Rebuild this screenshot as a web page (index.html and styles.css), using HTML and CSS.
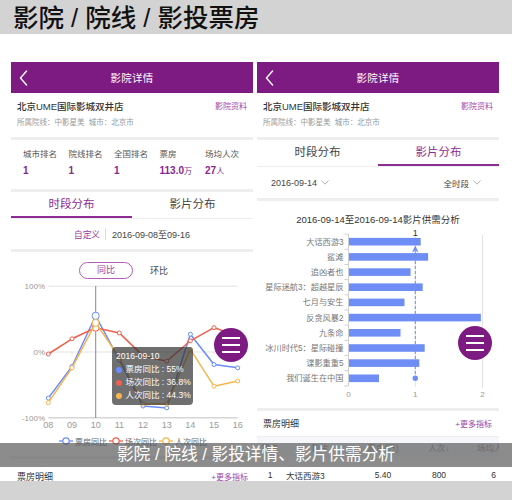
FILE: index.html
```html
<!DOCTYPE html>
<html lang="zh">
<head>
<meta charset="utf-8">
<title>影院 / 院线 / 影投票房</title>
<link rel="stylesheet" href="styles.css">
</head>
<body>
<div class="page">
  <div class="titlebar">影院 / 院线 / 影投票房</div>
  <div class="stage">
    <!-- Left phone -->
    <section class="phone">
      <div class="nav">
        <svg class="back" width="9" height="16" viewBox="0 0 9 16"><path d="M7.6 1 L1.4 8 L7.6 15" /></svg>
        <span class="nav-title">影院详情</span>
        <span></span>
      </div>
      <div class="info">
        <div class="name-row"><span class="name">北京UME国际影城双井店</span><span class="link">影院资料</span></div>
        <div class="sub">所属院线：中影星美&nbsp;&nbsp;城市：北京市</div>
      </div>
      <div class="band"></div>
      <div class="stats">
        <div class="stat"><div class="lbl">城市排名</div><div class="val">1</div></div>
        <div class="stat"><div class="lbl">院线排名</div><div class="val">1</div></div>
        <div class="stat"><div class="lbl">全国排名</div><div class="val">1</div></div>
        <div class="stat"><div class="lbl">票房</div><div class="val">113.0<small>万</small></div></div>
        <div class="stat"><div class="lbl">场均人次</div><div class="val">27<small>人</small></div></div>
      </div>
      <div class="band"></div>
      <div class="tabs"><div class="tab on">时段分布</div><div class="tab">影片分布</div></div>
      <div class="daterow"><span class="custom">自定义</span><span class="vsep"></span><span>2016-09-08至09-16</span></div>
      <div class="band"></div>
      <div class="toggle"><span class="pill">同比</span><span class="plain">环比</span></div>
      <div class="chart">
        <svg class="line-chart" width="242" height="152" viewBox="0 0 242 152">
          <g class="grid">
            <line x1="37.3" y1="7.2" x2="226.7" y2="7.2"/>
            <line x1="37.3" y1="73" x2="226.7" y2="73"/>
            <line class="axis" x1="37.3" y1="138.8" x2="226.7" y2="138.8"/>
            <line x1="61" y1="73" x2="61" y2="76"/>
            <line x1="108.3" y1="73" x2="108.3" y2="76"/>
            <line x1="155.7" y1="73" x2="155.7" y2="76"/>
            <line x1="203" y1="73" x2="203" y2="76"/>
          </g>
          <line class="cross" x1="84.65" y1="7" x2="84.65" y2="139"/>
          <g class="ylab">
            <text x="34" y="10.2">100%</text>
            <text x="34" y="76">0%</text>
            <text x="34" y="141.8">-100%</text>
          </g>
          <g class="xlab">
            <text x="37.3" y="149">08</text>
            <text x="61" y="149">09</text>
            <text x="84.65" y="149">10</text>
            <text x="108.3" y="149">11</text>
            <text x="132" y="149">12</text>
            <text x="155.7" y="149">13</text>
            <text x="179.35" y="149">14</text>
            <text x="203" y="149">15</text>
            <text x="226.7" y="149">16</text>
          </g>
          <g class="s-blue">
            <polyline points="37.3,119.1 61,87.5 84.65,36.8 108.3,80.9 132,127 155.7,128.9 179.35,55.2 203,85.5 226.7,88.8"/>
            <circle cx="37.3" cy="119.1" r="2"/><circle cx="61" cy="87.5" r="2"/><circle cx="84.65" cy="36.8" r="3.6"/>
            <circle cx="108.3" cy="80.9" r="2"/><circle cx="132" cy="127" r="2"/><circle cx="155.7" cy="128.9" r="2"/>
            <circle cx="179.35" cy="55.2" r="2"/><circle cx="203" cy="85.5" r="2"/><circle cx="226.7" cy="88.8" r="2"/>
          </g>
          <g class="s-red">
            <polyline points="37.3,75 61,59.8 84.65,48.8 108.3,53.9 132,76.9 155.7,82.2 179.35,61.8 203,48.7 226.7,56.6"/>
            <circle cx="37.3" cy="75" r="2"/><circle cx="61" cy="59.8" r="2"/><circle cx="84.65" cy="48.8" r="3.4"/>
            <circle cx="108.3" cy="53.9" r="2"/><circle cx="132" cy="76.9" r="2"/><circle cx="155.7" cy="82.2" r="2"/>
            <circle cx="179.35" cy="61.8" r="2"/><circle cx="203" cy="48.7" r="2"/><circle cx="226.7" cy="56.6" r="2"/>
          </g>
          <g class="s-orange">
            <polyline points="37.3,123.7 61,88.8 84.65,43.8 108.3,78.3 132,125 155.7,125 179.35,70.4 203,107.2 226.7,102"/>
            <circle cx="37.3" cy="123.7" r="2"/><circle cx="61" cy="88.8" r="2"/><circle cx="84.65" cy="43.8" r="3.4"/>
            <circle cx="108.3" cy="78.3" r="2"/><circle cx="132" cy="125" r="2"/><circle cx="155.7" cy="125" r="2"/>
            <circle cx="179.35" cy="70.4" r="2"/><circle cx="203" cy="107.2" r="2"/><circle cx="226.7" cy="102" r="2"/>
          </g>
        </svg>
        <div class="tooltip">
          <div class="tt-title">2016-09-10</div>
          <div class="tt-row"><i class="dot blue"></i>票房同比 : 55%</div>
          <div class="tt-row"><i class="dot red"></i>场次同比 : 36.8%</div>
          <div class="tt-row"><i class="dot orange"></i>人次同比 : 44.3%</div>
        </div>
      </div>
      <div class="legend">
        <div class="item"><svg viewBox="0 0 18 10"><line x1="2" y1="5" x2="16" y2="5" class="lg-blue"/><circle cx="9" cy="5" r="3.2" class="lg-blue"/></svg>票房同比</div>
        <div class="item"><svg viewBox="0 0 18 10"><line x1="2" y1="5" x2="16" y2="5" class="lg-red"/><circle cx="9" cy="5" r="3.2" class="lg-red"/></svg>场次同比</div>
        <div class="item"><svg viewBox="0 0 18 10"><line x1="2" y1="5" x2="16" y2="5" class="lg-orange"/><circle cx="9" cy="5" r="3.2" class="lg-orange"/></svg>人次同比</div>
      </div>
      <div class="band gap-top"></div>
      <div class="sectrow tall"><span>票房明细</span><span class="more">+更多指标</span></div>
      <div class="fab fab-left">
        <svg width="18" height="16" viewBox="0 0 18 16"><line x1="0" y1="1" x2="18" y2="1"/><line x1="0" y1="8" x2="18" y2="8"/><line x1="0" y1="15" x2="18" y2="15"/></svg>
      </div>
    </section>

    <!-- Right phone -->
    <section class="phone">
      <div class="nav">
        <svg class="back" width="9" height="16" viewBox="0 0 9 16"><path d="M7.6 1 L1.4 8 L7.6 15" /></svg>
        <span class="nav-title">影院详情</span>
        <span></span>
      </div>
      <div class="info">
        <div class="name-row"><span class="name">北京UME国际影城双井店</span><span class="link">影院资料</span></div>
        <div class="sub">所属院线：中影星美&nbsp;&nbsp;城市：北京市</div>
      </div>
      <div class="band"></div>
      <div class="tabs"><div class="tab">时段分布</div><div class="tab on">影片分布</div></div>
      <div class="filters">
        <span class="sel">2016-09-14<svg width="8" height="5" viewBox="0 0 8 5"><path d="M0.5 0.5 L4 4.2 L7.5 0.5"/></svg></span>
        <span class="sel">全时段<svg width="8" height="5" viewBox="0 0 8 5"><path d="M0.5 0.5 L4 4.2 L7.5 0.5"/></svg></span>
      </div>
      <div class="band"></div>
      <div class="chart-title">2016-09-14至2016-09-14影片供需分析</div>
      <svg class="bar-chart" width="242" height="182" viewBox="0 0 242 182">
        <line class="vgrid" x1="158.3" y1="9" x2="158.3" y2="161"/>
        <line class="vgrid" x1="225.6" y1="9" x2="225.6" y2="162"/>
        <g class="bars">
          <rect x="91" y="11.9" width="72.7" height="7.6"/>
          <rect x="91" y="27.1" width="80.1" height="7.6"/>
          <rect x="91" y="42.3" width="62.6" height="7.6"/>
          <rect x="91" y="57.4" width="74.7" height="7.6"/>
          <rect x="91" y="72.6" width="56.5" height="7.6"/>
          <rect x="91" y="87.8" width="132.9" height="7.6"/>
          <rect x="91" y="103" width="52.5" height="7.6"/>
          <rect x="91" y="118.2" width="76.7" height="7.6"/>
          <rect x="91" y="133.3" width="71.3" height="7.6"/>
          <rect x="91" y="148.5" width="31" height="7.6"/>
        </g>
        <g class="yaxis">
          <line x1="91.5" y1="8" x2="91.5" y2="160"/>
          <line x1="87.5" y1="8.1" x2="91.5" y2="8.1"/>
          <line x1="87.5" y1="23.3" x2="91.5" y2="23.3"/>
          <line x1="87.5" y1="38.5" x2="91.5" y2="38.5"/>
          <line x1="87.5" y1="53.6" x2="91.5" y2="53.6"/>
          <line x1="87.5" y1="68.8" x2="91.5" y2="68.8"/>
          <line x1="87.5" y1="84" x2="91.5" y2="84"/>
          <line x1="87.5" y1="99.2" x2="91.5" y2="99.2"/>
          <line x1="87.5" y1="114.4" x2="91.5" y2="114.4"/>
          <line x1="87.5" y1="129.5" x2="91.5" y2="129.5"/>
          <line x1="87.5" y1="144.7" x2="91.5" y2="144.7"/>
          <line x1="87.5" y1="159.9" x2="91.5" y2="159.9"/>
        </g>
        <g class="cats">
          <text x="86.5" y="18.6">大话西游3</text>
          <text x="86.5" y="33.8">鲨滩</text>
          <text x="86.5" y="49">追凶者也</text>
          <text x="86.5" y="64.1">星际迷航3：超越星辰</text>
          <text x="86.5" y="79.3">七月与安生</text>
          <text x="86.5" y="94.5">反贪风暴2</text>
          <text x="86.5" y="109.7">九条命</text>
          <text x="86.5" y="124.9">冰川时代5：星际碰撞</text>
          <text x="86.5" y="140">谍影重重5</text>
          <text x="86.5" y="155.2">我们诞生在中国</text>
        </g>
        <g class="mark">
          <line x1="158.3" y1="25" x2="158.3" y2="150"/>
          <path d="M158.3 19.4 L161.6 26.6 L158.3 24.6 L155 26.6 Z"/>
          <circle cx="158.3" cy="152.3" r="2.7"/>
        </g>
        <text class="mark-label" x="158.3" y="10.2">1</text>
        <g class="xvals">
          <text x="91.5" y="170.5">0</text>
          <text x="158.3" y="170.5">1</text>
          <text x="225.6" y="170.5">2</text>
        </g>
      </svg>
      <div class="band"></div>
      <div class="sectrow"><span>票房明细</span><span class="more">+更多指标</span></div>
      <div class="table">
        <div class="thead">
          <span class="c1">排名</span><span class="c2">影片</span><span class="c3">票房(万)</span><span class="c4">人次↓</span><span class="c5">场均人次</span>
        </div>
        <div class="trow">
          <span class="c1">1</span><span class="c2 left">大话西游3</span><span class="c3">5.40</span><span class="c4">800</span><span class="c5 right">6</span>
        </div>
      </div>
      <div class="fab fab-right">
        <svg width="18" height="16" viewBox="0 0 18 16"><line x1="0" y1="1" x2="18" y2="1"/><line x1="0" y1="8" x2="18" y2="8"/><line x1="0" y1="15" x2="18" y2="15"/></svg>
      </div>
    </section>
  </div>
  <div class="footer"></div>
  <div class="caption">影院 / 院线 / 影投详情、影片供需分析</div>
</div>
</body>
</html>
```

FILE: styles.css
```css
* { box-sizing: border-box; margin: 0; padding: 0; }
html, body { margin: 0; background: #d3d3d3; }
body { font-family: "Liberation Sans", "Noto Sans CJK SC", sans-serif; }

.page {
  position: relative;
  width: 512px;
  height: 500px;
  overflow: hidden;
  background: #d3d3d3;
  display: flex;
  flex-direction: column;
}

.titlebar {
  flex: none;
  height: 34px;
  padding: 2px 0 0 13px;
  font-size: 25.5px;
  line-height: 32px;
  color: #111;
  font-weight: 500;
  white-space: nowrap;
  overflow: hidden;
}

.stage {
  flex: none;
  height: 447px;
  background: #fff;
  display: flex;
  gap: 4px;
  padding: 28px 0 0 11px;
  overflow: hidden;
}

.footer { flex: 1; background: #d3d3d3; }

.phone {
  position: relative;
  width: 242px;
  flex: none;
  display: flex;
  flex-direction: column;
  overflow: hidden;
  background: #fff;
}
.phone > * { flex: none; }

/* nav bar */
.nav {
  height: 31px;
  background: #7d1b83;
  display: grid;
  grid-template-columns: 30px 1fr 30px;
  align-items: center;
  color: #fff;
}
.back { margin-left: 8px; display: block; }
.back path { fill: none; stroke: #fff; stroke-width: 1.4; stroke-linecap: round; stroke-linejoin: round; }
.nav-title { text-align: center; font-size: 10.5px; letter-spacing: 0.3px; }

/* info */
.info { padding: 6px 6px 9px 6px; }
.name-row { display: flex; justify-content: space-between; align-items: center; height: 13px; }
.name { font-size: 9.5px; color: #333; font-weight: 500; }
.link { font-size: 8px; color: #a84aae; }
.sub { margin-top: 5px; font-size: 7.5px; line-height: 11px; color: #9a9a9a; }

.band { height: 3px; background: #eeeeee; }
.band.gap-top { margin-top: 5px; }

/* stats */
.stats {
  display: grid;
  grid-template-columns: repeat(5, 45.5px);
  padding: 8px 0 10px 12px;
}
.lbl { font-size: 8.5px; line-height: 12px; color: #555; white-space: nowrap; }
.val { margin-top: 4px; font-size: 10px; line-height: 14px; font-weight: bold; color: #8a2790; white-space: nowrap; }
.val small { font-size: 8px; font-weight: normal; }

/* tabs */
.tabs {
  display: grid;
  grid-template-columns: 1fr 1fr;
  border-bottom: 1px solid #ededed;
}
.tab {
  text-align: center;
  font-size: 11.5px;
  line-height: 24px;
  color: #444;
  border-bottom: 2px solid transparent;
}
.tab.on { color: #8e2c95; border-bottom-color: #8e2c95; }

/* date row */
.daterow {
  height: 30px;
  display: flex;
  justify-content: center;
  align-items: center;
  font-size: 9px;
  color: #444;
}
.custom { font-size: 8.7px; color: #9b3aa1; }
.vsep { width: 1px; height: 12px; background: #dcdcdc; margin: 0 6px 0 5px; }

/* toggle */
.toggle {
  display: flex;
  align-items: center;
  padding: 10px 0 0 68px;
}
.pill {
  width: 54px;
  height: 17px;
  border: 1px solid #b35db9;
  border-radius: 9px;
  text-align: center;
  font-size: 9px;
  line-height: 15px;
  color: #9c3aa2;
}
.plain { margin-left: 17px; font-size: 9px; color: #444; }

/* line chart */
.chart { position: relative; height: 152px; }
.line-chart { display: block; }
.grid line { stroke: #e3e3e3; stroke-width: 1; }
.grid line.axis { stroke: #d6d6d6; stroke-width: 1.4; }
.cross { stroke: #9c9c9c; stroke-width: 1.2; }
.ylab text { font-size: 8px; fill: #9a9a9a; text-anchor: end; }
.xlab text { font-size: 9px; fill: #9a9a9a; text-anchor: middle; }
.s-blue polyline, .s-red polyline, .s-orange polyline { fill: none; stroke-width: 1.5; stroke-linejoin: round; }
.s-blue circle, .s-red circle, .s-orange circle { fill: #fff; stroke-width: 1; }
.s-blue polyline, .s-blue circle { stroke: #6b8cff; }
.s-red polyline, .s-red circle { stroke: #f0604d; }
.s-orange polyline, .s-orange circle { stroke: #f8b64a; }

.tooltip {
  position: absolute;
  left: 101px;
  top: 68px;
  width: 81px;
  height: 58px;
  background: rgba(50, 50, 50, 0.7);
  border-radius: 4px;
  padding: 3px 0 0 4px;
  color: #fff;
  font-size: 8.5px;
  line-height: 13px;
  white-space: nowrap;
}
.tt-row { display: flex; align-items: center; }
.dot { display: inline-block; width: 6px; height: 6px; border-radius: 50%; margin-right: 3.5px; }
.dot.blue { background: #6b8cff; }
.dot.red { background: #f0604d; }
.dot.orange { background: #f8b64a; }

/* legend */
.legend { height: 20px; display: flex; justify-content: center; align-items: center; }
.legend .item { display: flex; align-items: center; font-size: 8px; color: #666; white-space: nowrap; }
.legend svg { width: 18px; height: 10px; display: block; }
.legend line { stroke-width: 1.3; }
.legend circle { fill: #fff; stroke-width: 1.2; }
.lg-blue { stroke: #6b8cff; }
.lg-red { stroke: #f0604d; }
.lg-orange { stroke: #f8b64a; }

/* section row */
.sectrow {
  height: 25px;
  padding: 0 7px 0 6px;
  display: flex;
  justify-content: space-between;
  align-items: center;
  font-size: 9px;
  color: #333;
}
.sectrow.tall { height: 34px; padding-right: 5px; }
.more { font-size: 8px; color: #a03fa6; }

/* floating menu button */
.fab {
  position: absolute;
  width: 34px;
  height: 34px;
  border-radius: 50%;
  background: #7d1b83;
  display: flex;
  align-items: center;
  justify-content: center;
}
.fab line { stroke: #fff; stroke-width: 2; }
.fab-left { left: 203px; top: 266px; }
.fab-right { left: 201px; top: 264px; }

/* right phone filters */
.filters {
  height: 31px;
  display: flex;
  justify-content: space-between;
  align-items: center;
  padding: 0 18px 0 14px;
  font-size: 9px;
  color: #444;
}
.filters .sel { display: flex; align-items: center; }
.filters .sel:last-child { font-size: 8.5px; }
.filters svg { margin-left: 4px; display: block; }
.filters path { fill: none; stroke: #aaa; stroke-width: 0.9; }

.chart-title {
  padding-top: 12px;
  line-height: 13px;
  height: 25px;
  text-align: center;
  font-size: 9.5px;
  color: #333;
}

.bar-chart { display: block; }
.vgrid { stroke: #e2e2e2; stroke-width: 1; }
.bars rect { fill: #6e8ef6; }
.yaxis line { stroke: #cfcfcf; stroke-width: 1; }
.cats text { font-size: 8.2px; fill: #777; text-anchor: end; }
.mark line { stroke: #6e8ef6; stroke-width: 1; stroke-dasharray: 3 2; }
.mark path, .mark circle { fill: #6e8ef6; }
.mark-label { font-size: 9px; fill: #333; text-anchor: middle; }
.xvals text { font-size: 8px; fill: #9a9a9a; text-anchor: middle; }

/* table */
.table { border-top: 1px solid #eee; }
.thead, .trow {
  display: grid;
  grid-template-columns: 26px 74px 52px 60px 1fr;
  align-items: center;
  white-space: nowrap;
}
.thead { height: 20px; background: #f5f7fb; font-size: 8.5px; color: #999; }
.trow { height: 36px; font-size: 8.5px; color: #333; border-bottom: 1px solid #eee; }
.thead span, .trow span { text-align: center; overflow: visible; }
.thead .c5 { text-align: left; padding-left: 8px; }
.trow .left { text-align: left; padding-left: 3px; }
.trow .right { text-align: right; padding-right: 3px; }

/* caption overlay */
.caption {
  position: absolute;
  left: 0;
  right: 0;
  top: 443px;
  height: 24px;
  background: rgba(85, 85, 85, 0.68);
  color: #fff;
  font-size: 16.7px;
  line-height: 24px;
  text-align: center;
  white-space: nowrap;
}
```
